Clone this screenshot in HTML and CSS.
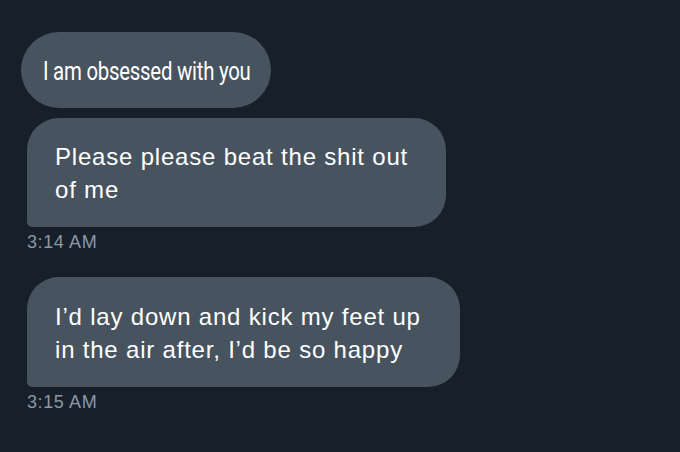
FILE: index.html
```html
<!DOCTYPE html>
<html>
<head>
<meta charset="utf-8">
<link rel="stylesheet" href="styles.css">
</head>
<body>
<div class="thread">
  <div class="bubble bubble-pill"><span class="pill-text">I am obsessed with you</span></div>
  <div class="bubble bubble-tail bubble-a">Please please beat the shit out of me</div>
  <div class="time">3:14 AM</div>
  <div class="bubble bubble-tail bubble-b">I’d lay down and kick my feet up in the air after, I’d be so happy</div>
  <div class="time">3:15 AM</div>
</div>
</body>
</html>
```
FILE: styles.css
```css
html, body {
  margin: 0;
  padding: 0;
  background: #171f2a;
  width: 680px;
  height: 452px;
  overflow: hidden;
}
.thread {
  display: flex;
  flex-direction: column;
  align-items: flex-start;
  padding-top: 32px;
}
.bubble {
  background: #47535f;
  color: #ffffff;
  box-sizing: border-box;
}
.bubble-pill {
  margin-left: 21px;
  width: 250px;
  height: 76px;
  padding: 2px 0 0 22px;
  border-radius: 38px;
  display: flex;
  align-items: center;
  font-family: Roboto, sans-serif;
  font-size: 25px;
  letter-spacing: -0.3px;
  white-space: nowrap;
}
.pill-text {
  display: inline-block;
  transform: scaleX(0.815);
  transform-origin: left center;
}
.bubble-tail {
  margin-left: 27px;
  font-family: "Liberation Sans", Arial, sans-serif;
  font-size: 24px;
  letter-spacing: 0.8px;
  line-height: 33px;
  border-radius: 32px 32px 32px 5px;
  padding: 22px 28px 21px 28px;
}
.bubble-a {
  margin-top: 10px;
  width: 419px;
  height: 109px;
}
.bubble-b {
  margin-top: 25px;
  width: 433px;
  height: 110px;
  padding-top: 23px;
}
.time {
  margin-left: 27px;
  margin-top: 5px;
  font-family: "Liberation Sans", Arial, sans-serif;
  font-size: 18px;
  letter-spacing: 0.6px;
  line-height: 20px;
  color: #8b98a5;
}
```
